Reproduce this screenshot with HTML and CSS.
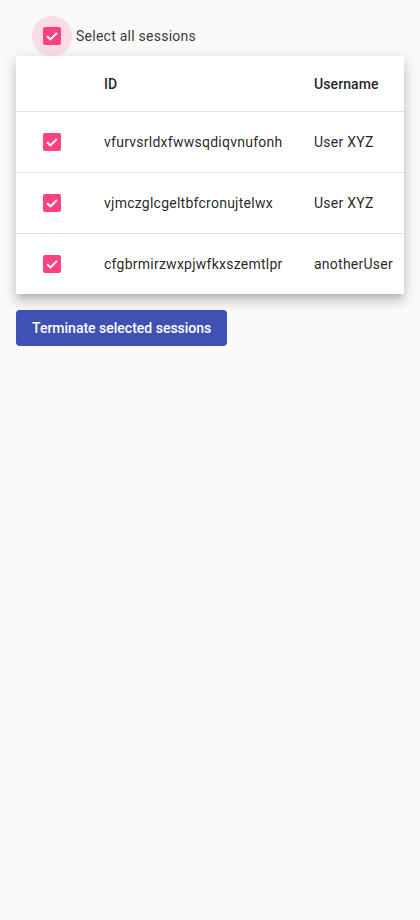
FILE: index.html
```html
<!DOCTYPE html>
<html>
<head>
<meta charset="utf-8">
<link rel="stylesheet" href="styles.css">
</head>
<body>
<div class="page">
  <label class="select-all">
    <span class="cb-touch ripple"><span class="cb"><svg viewBox="0 0 18 18" width="18" height="18"><path d="M4.1 9.2 L7.4 12.4 L13.9 5.9" fill="none" stroke="#fff" stroke-width="2.1"/></svg></span></span>
    <span class="select-all-label">Select all sessions</span>
  </label>
  <div class="card">
    <div class="row header">
      <div class="c-check"></div>
      <div class="c-id">ID</div>
      <div class="c-user">Username</div>
    </div>
    <div class="row">
      <div class="c-check"><span class="cb-touch"><span class="cb"><svg viewBox="0 0 18 18" width="18" height="18"><path d="M4.1 9.2 L7.4 12.4 L13.9 5.9" fill="none" stroke="#fff" stroke-width="2.1"/></svg></span></span></div>
      <div class="c-id">vfurvsrldxfwwsqdiqvnufonh</div>
      <div class="c-user">User XYZ</div>
    </div>
    <div class="row">
      <div class="c-check"><span class="cb-touch"><span class="cb"><svg viewBox="0 0 18 18" width="18" height="18"><path d="M4.1 9.2 L7.4 12.4 L13.9 5.9" fill="none" stroke="#fff" stroke-width="2.1"/></svg></span></span></div>
      <div class="c-id">vjmczglcgeltbfcronujtelwx</div>
      <div class="c-user">User XYZ</div>
    </div>
    <div class="row last">
      <div class="c-check"><span class="cb-touch"><span class="cb"><svg viewBox="0 0 18 18" width="18" height="18"><path d="M4.1 9.2 L7.4 12.4 L13.9 5.9" fill="none" stroke="#fff" stroke-width="2.1"/></svg></span></span></div>
      <div class="c-id">cfgbrmirzwxpjwfkxszemtlpr</div>
      <div class="c-user">anotherUser</div>
    </div>
  </div>
  <button class="btn">Terminate selected sessions</button>
</div>
</body>
</html>
```

FILE: styles.css
```css
html, body {
  margin: 0;
  padding: 0;
  background: #fafafa;
  font-family: Roboto, "Liberation Sans", sans-serif;
  font-size: 14px;
  color: rgba(0,0,0,0.87);
}
.page {
  padding: 16px 16px;
  display: flex;
  flex-direction: column;
  align-items: flex-start;
}
.select-all {
  display: flex;
  align-items: center;
  margin-left: 16px;
  height: 40px;
}
.cb-touch {
  width: 40px;
  height: 40px;
  border-radius: 50%;
  display: flex;
  align-items: center;
  justify-content: center;
}
.ripple {
  background: rgba(255, 64, 129, 0.16);
}
.cb {
  width: 18px;
  height: 18px;
  border-radius: 2px;
  background: #ff4081;
  display: block;
}
.cb svg { display: block; }
.select-all-label {
  margin-left: 4px;
  color: rgba(0,0,0,0.8);
  font-size: 14px;
  letter-spacing: 0.25px;
}
.card {
  width: 388px;
  background: #fff;
  box-shadow: 0 5px 5px -3px rgba(0,0,0,.16), 0 8px 10px 1px rgba(0,0,0,.11), 0 3px 14px 2px rgba(0,0,0,.10);
  overflow: hidden;
}
.row {
  display: grid;
  grid-template-columns: 88px 210px 1fr;
  align-items: center;
  box-sizing: border-box;
  height: 61px;
  border-bottom: 1px solid #e0e0e0;
  white-space: nowrap;
  letter-spacing: 0.25px;
}
.row.header {
  height: 56px;
  font-weight: 500;
  letter-spacing: 0.1px;
  color: rgba(0,0,0,0.87);
}
.row.last { border-bottom: none; height: 60px; }
.c-check {
  padding-left: 16px;
  display: flex;
}
.c-id, .c-user {
  color: rgba(0,0,0,0.87);
}
.btn {
  margin-top: 16px;
  height: 36px;
  padding: 0 16px;
  border: none;
  border-radius: 4px;
  background: #3f51b5;
  color: #fff;
  font-family: Roboto, "Liberation Sans", sans-serif;
  font-size: 14px;
  font-weight: 500;
  letter-spacing: 0;
}
```
